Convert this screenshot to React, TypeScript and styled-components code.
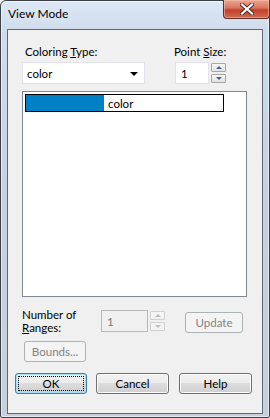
import React from "react";
import styled, { createGlobalStyle } from "styled-components";

const Global = createGlobalStyle`
  html, body { margin: 0; padding: 0; background: #ffffff; }
  body { font-family: Lato, "Liberation Sans", sans-serif; font-size: 11.5px; color: #000; }
  * { box-sizing: border-box; }
`;

const Window = styled.div`
  width: 270px;
  height: 418px;
  border: 1px solid #3b4048;
  border-radius: 6px 6px 2px 2px;
  background: linear-gradient(180deg, #dce8f6 0px, #cfdcec 30px, #c5d1df 200px, #c8d0d9 100%);
  padding: 0 6px 3px 6px;
  display: flex;
  flex-direction: column;
  box-shadow: inset 0 0 0 1px rgba(255, 255, 255, 0.55);
`;

const TitleBar = styled.div`
  height: 28px;
  position: relative;
  display: flex;
  align-items: center;
  padding-left: 1px;
`;

const Title = styled.span`
  font-size: 12px;
  color: #000;
  margin-top: -3px;
  text-shadow: 0 0 8px rgba(255, 255, 255, 0.9);
`;

const CloseBtn = styled.div`
  position: absolute;
  right: -7px;
  top: -1px;
  width: 47px;
  height: 19px;
  border: 1px solid #5b2f2a;
  border-top: none;
  border-radius: 0 0 4px 4px;
  background: linear-gradient(180deg, #eaa693 0%, #d9745e 45%, #c2412a 55%, #cf6a4f 100%);
  box-shadow: inset 0 0 0 1px rgba(255, 200, 180, 0.5);
  display: flex;
  align-items: center;
  justify-content: center;
`;

const Client = styled.div`
  flex: 1;
  background: #f0f0f0;
  border: 1px solid #59687a;
  display: flex;
  flex-direction: column;
  padding-top: 14px;
`;

const TopRow = styled.div`
  display: flex;
  padding-left: 14px;
`;

const Field = styled.div<{ $ml?: number; $w?: number }>`
  display: flex;
  flex-direction: column;
  margin-left: ${(p) => p.$ml ?? 0}px;
  width: ${(p) => (p.$w ? `${p.$w}px` : "auto")};
`;

const Label = styled.div<{ $ml?: number }>`
  line-height: 15px;
  height: 15px;
  margin-left: ${(p) => p.$ml ?? 3}px;
  white-space: nowrap;
`;

const Combo = styled.div`
  margin-top: 3px;
  width: 123px;
  height: 22px;
  background: #fff;
  border: 1px solid #e2e3ea;
  display: flex;
  align-items: center;
  justify-content: space-between;
  padding: 0 6px 0 4px;
`;

const Caret = styled.span`
  width: 0;
  height: 0;
  border-left: 4px solid transparent;
  border-right: 4px solid transparent;
  border-top: 4px solid #000;
  margin-top: 1px;
`;

const SpinWrap = styled.div<{ $mt?: number; $ml?: number }>`
  display: flex;
  gap: 2px;
  margin-top: ${(p) => p.$mt ?? 0}px;
  margin-left: ${(p) => p.$ml ?? 0}px;
`;

const SpinEdit = styled.div<{ $w: number; $disabled?: boolean }>`
  width: ${(p) => p.$w}px;
  height: 22px;
  background: ${(p) => (p.$disabled ? "#f0f0f0" : "#fff")};
  border: 1px solid ${(p) => (p.$disabled ? "#b8b8b8" : "#e2e3ea")};
  color: ${(p) => (p.$disabled ? "#7a7a7a" : "#000")};
  display: flex;
  align-items: center;
  padding-left: 5px;
`;

const SpinButtons = styled.div`
  display: flex;
  flex-direction: column;
  justify-content: space-between;
  height: 22px;
  padding: 1px 0 1px 0;
`;

const SpinBtn = styled.div<{ $disabled?: boolean }>`
  width: 15px;
  height: 9px;
  border: 1px solid ${(p) => (p.$disabled ? "#d0d0d0" : "#a7a7a7")};
  border-radius: 1px;
  background: ${(p) =>
    p.$disabled ? "#f4f4f4" : "linear-gradient(180deg, #f6f6f6 0%, #e3e3e3 100%)"};
  display: flex;
  align-items: center;
  justify-content: center;
`;

const Tri = styled.span<{ $up?: boolean; $disabled?: boolean }>`
  width: 0;
  height: 0;
  border-left: 3px solid transparent;
  border-right: 3px solid transparent;
  ${(p) =>
    p.$up
      ? `border-bottom: 3px solid ${p.$disabled ? "#b9bec6" : "#4e5f80"};`
      : `border-top: 3px solid ${p.$disabled ? "#b9bec6" : "#4e5f80"};`}
`;

const ListBox = styled.div`
  margin: 7px 0 0 14px;
  width: 225px;
  height: 206px;
  background: #fff;
  border: 1px solid #828790;
  padding: 2px;
`;

const Item = styled.div`
  width: 199px;
  height: 18px;
  border: 1px solid #000;
  display: flex;
  align-items: center;
`;

const Swatch = styled.span<{ $c: string }>`
  width: 78px;
  height: 100%;
  background: ${(p) => p.$c};
`;

const ItemText = styled.span`
  margin-left: 4px;
`;

const RangesRow = styled.div`
  display: flex;
  align-items: flex-start;
  margin-top: 10px;
  padding-left: 14px;
  height: 28px;
`;

const RangesLabel = styled.div`
  width: 79px;
  line-height: 13px;
  margin-top: 1px;
`;

const Btn = styled.div<{ $w: number; $disabled?: boolean; $default?: boolean; $mt?: number; $ml?: number }>`
  width: ${(p) => p.$w}px;
  height: 21px;
  margin-top: ${(p) => p.$mt ?? 0}px;
  margin-left: ${(p) => p.$ml ?? 0}px;
  border-radius: 3px;
  border: 1px solid ${(p) => (p.$disabled ? "#adb2b5" : p.$default ? "#3c7fb1" : "#707070")};
  background: ${(p) =>
    p.$disabled
      ? "#f4f4f4"
      : "linear-gradient(180deg, #f2f2f2 0%, #ebebeb 49%, #dddddd 50%, #cfcfcf 100%)"};
  color: ${(p) => (p.$disabled ? "#838383" : "#000")};
  box-shadow: ${(p) =>
    p.$disabled ? "none" : p.$default ? "inset 0 0 0 1px #a6dcf5" : "inset 0 0 0 1px #fcfcfc"};
  display: flex;
  align-items: center;
  justify-content: center;
  position: relative;
`;

const Focus = styled.span`
  position: absolute;
  inset: 2px;
  border: 1px dotted #000;
`;

const BoundsRow = styled.div`
  padding-left: 16px;
  margin-top: 6px;
`;

const ButtonRow = styled.div`
  display: flex;
  padding-left: 7px;
  margin-top: 11px;
`;

const CloseIcon = () => (
  <svg width="14" height="12" viewBox="0 0 14 12">
    <path d="M2 1.5 L12 10.5 M12 1.5 L2 10.5" stroke="#4a2520" strokeWidth="4" strokeLinecap="square" />
    <path d="M2 1.5 L12 10.5 M12 1.5 L2 10.5" stroke="#ffffff" strokeWidth="2.2" strokeLinecap="square" />
  </svg>
);

const Spinner = ({ w, disabled, mt, ml }: { w: number; disabled?: boolean; mt?: number; ml?: number }) => (
  <SpinWrap $mt={mt} $ml={ml}>
    <SpinEdit $w={w} $disabled={disabled}>1</SpinEdit>
    <SpinButtons>
      <SpinBtn $disabled={disabled}>
        <Tri $up $disabled={disabled} />
      </SpinBtn>
      <SpinBtn $disabled={disabled}>
        <Tri $disabled={disabled} />
      </SpinBtn>
    </SpinButtons>
  </SpinWrap>
);

export default function App() {
  return (
    <>
      <Global />
      <Window>
        <TitleBar>
          <Title>View Mode</Title>
          <CloseBtn>
            <CloseIcon />
          </CloseBtn>
        </TitleBar>
        <Client>
          <TopRow>
            <Field $w={123}>
              <Label>
                Coloring <u>T</u>ype:
              </Label>
              <Combo>
                <span>color</span>
                <Caret />
              </Combo>
            </Field>
            <Field $ml={29}>
              <Label $ml={0}>
                Point <u>S</u>ize:
              </Label>
              <Spinner w={34} mt={3} ml={1} />
            </Field>
          </TopRow>
          <ListBox>
            <Item>
              <Swatch $c="#0080c4" />
              <ItemText>color</ItemText>
            </Item>
          </ListBox>
          <RangesRow>
            <RangesLabel>
              Number of
              <br />
              <u>R</u>anges:
            </RangesLabel>
            <Spinner w={47} disabled mt={3} />
            <Btn $w={58} $disabled $mt={5} $ml={20}>
              Update
            </Btn>
          </RangesRow>
          <BoundsRow>
            <Btn $w={62} $disabled>
              Bounds...
            </Btn>
          </BoundsRow>
          <ButtonRow>
            <Btn $w={72} $default>
              OK
              <Focus />
            </Btn>
            <Btn $w={73} $ml={9}>
              Cancel
            </Btn>
            <Btn $w={73} $ml={10}>
              Help
            </Btn>
          </ButtonRow>
        </Client>
      </Window>
    </>
  );
}
